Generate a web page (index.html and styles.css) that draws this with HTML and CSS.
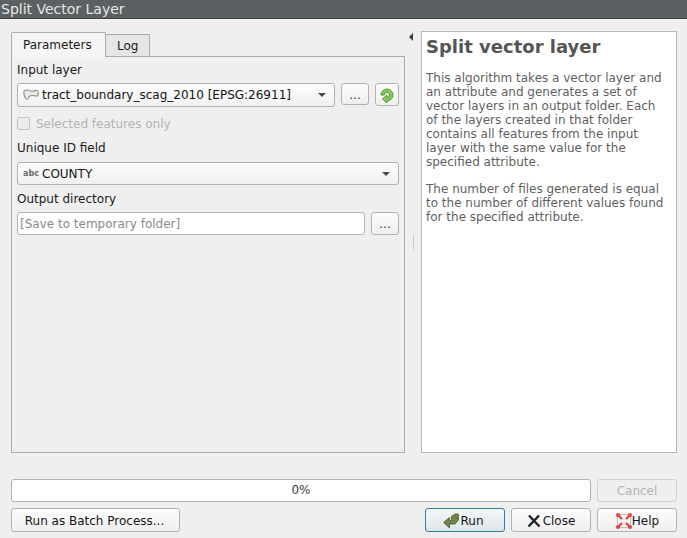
FILE: index.html
```html
<!DOCTYPE html>
<html lang="en">
<head>
<meta charset="utf-8">
<title>Split Vector Layer</title>
<link rel="stylesheet" href="styles.css">
</head>
<body>
<div class="window">
  <div class="titlebar"><span class="title">Split Vector Layer</span></div>
  <div class="content">
    <div class="main">
      <div class="left">
        <div class="tabs">
          <div class="tab active">Parameters</div>
          <div class="tab">Log</div>
        </div>
        <div class="pane">
          <div class="label first">Input layer</div>
          <div class="row">
            <div class="combo grow">
              <svg class="ico-poly" width="16" height="12" viewBox="0 0 16 12"><path d="M0.8 3.5 Q0.8 1 3.5 1 Q6 0.8 8 2 Q10 2.8 12 1.5 Q15 0.8 15.3 3.5 Q15.5 7 13.5 7 Q10 6.3 7.5 6.7 Q5.8 7 5 9.5 Q4 11 2.8 9.5 Q0.8 6.5 0.8 3.5 Z" fill="#e9e9e6" stroke="#8e8e8b" stroke-width="1.1"/></svg>
              <span class="combo-text">tract_boundary_scag_2010 [EPSG:26911]</span>
              <span class="arrow"></span>
            </div>
            <button class="btn dots">...</button>
            <button class="btn refresh">
              <svg width="16" height="16" viewBox="0 0 16 16"><path d="M2 8 A6 6 0 1 1 8 14 L8 16 L3.5 12 L8 8 L8 10.5 A2.6 2.6 0 1 0 5.4 8 Z" fill="#86c95a" stroke="#4a9a35" stroke-width="1" stroke-linejoin="round"/></svg>
            </button>
          </div>
          <label class="check"><span class="box"></span>Selected features only</label>
          <div class="label uid">Unique ID field</div>
          <div class="combo field">
            <span class="abc">abc</span>
            <span class="combo-text">COUNTY</span>
            <span class="arrow"></span>
          </div>
          <div class="label out">Output directory</div>
          <div class="row">
            <div class="input grow">[Save to temporary folder]</div>
            <button class="btn dots tall">...</button>
          </div>
        </div>
      </div>
      <div class="splitter">
        <span class="collapse"></span>
        <span class="grip"></span>
      </div>
      <div class="help">
        <h1>Split vector layer</h1>
        <p>This algorithm takes a vector layer and an attribute and generates a set of vector layers in an output folder. Each of the layers created in that folder contains all features from the input layer with the same value for the specified attribute.</p>
        <p>The number of files generated is equal to the number of different values found for the specified attribute.</p>
      </div>
    </div>
    <div class="progress-row">
      <div class="progress">0%</div>
      <button class="btn cancel" disabled>Cancel</button>
    </div>
    <div class="button-row">
      <button class="btn batch">Run as Batch Process...</button>
      <span class="spacer"></span>
      <button class="btn act run">
        <svg width="16" height="16" viewBox="0 0 16 16"><path d="M0.7 9.5 L6.5 4.5 L6.5 7.5 L8.5 7.5 L8.5 3.5 L12 1 L15.3 1 L15.3 7 L12 11 L6.5 11 L6.5 15 Z" fill="#6f8447" stroke="#55683a" stroke-width="1" stroke-linejoin="round"/></svg>
        <span>Run</span>
      </button>
      <button class="btn act close">
        <svg width="14" height="14" viewBox="0 0 14 14"><path d="M2 1.5 L12.5 12.5 M12 1.5 L1.5 12.5" stroke="#222" stroke-width="2.4"/></svg>
        <span>Close</span>
      </button>
      <button class="btn act helpbtn">
        <svg width="18" height="18" viewBox="0 0 18 18"><rect x="2.5" y="2.5" width="13" height="13" fill="#f7f2f2" stroke="#c4b8b8"/><path d="M3 3 L7 7 M15 3 L11 7 M3 15 L7 11 M15 15 L11 11" stroke="#e04545" stroke-width="2.4"/><circle cx="3" cy="3" r="2" fill="#e04545"/><circle cx="15" cy="3" r="2" fill="#e04545"/><circle cx="3" cy="15" r="2" fill="#e04545"/><circle cx="15" cy="15" r="2" fill="#e04545"/></svg>
        <span>Help</span>
      </button>
    </div>
  </div>
</div>
</body>
</html>
```
FILE: styles.css
```css
* { box-sizing: border-box; }
html, body { margin: 0; padding: 0; }
body {
  width: 687px;
  height: 538px;
  overflow: hidden;
  background: #efefef;
  font-family: "DejaVu Sans", sans-serif;
  font-size: 12px;
  color: #1a1a1a;
}
.window { display: flex; flex-direction: column; height: 538px; }
.titlebar {
  height: 19px;
  flex: none;
  background: #5b6162;
  border-bottom: 1px solid #3f4445;
  overflow: hidden;
  padding-left: 1px;
}
.title {
  display: block;
  margin-top: 0;
  font-size: 14px;
  line-height: 18px;
  color: #e6e6e6;
}
.content { flex: 1; display: flex; flex-direction: column; padding: 12px 10px 6px 11px; min-height: 0; }
.main { display: flex; height: 422px; flex: none; }
.left { width: 394px; flex: none; display: flex; flex-direction: column; padding-top: 1px; }
.tabs { display: flex; align-items: flex-end; height: 24px; flex: none; position: relative; z-index: 1; }
.tab {
  height: 22px;
  padding: 3px 11px 0;
  background: #e6e6e6;
  border: 1px solid #ababab;
  border-bottom: 0;
  border-left: 0;
  border-radius: 0 2px 0 0;
  line-height: 17px;
}
.tab.active {
  height: 25px;
  margin-bottom: -1px;
  width: 95px;
  padding: 3px 11px 0;
  background: #f5f5f5;
  border-left: 1px solid #ababab;
  border-radius: 2px 2px 0 0;
  line-height: 18px;
  text-align: left;
}
.pane {
  flex: 1;
  background: #efefef;
  border: 1px solid #ababab;
  padding: 6px 5px 0;
}
.label { line-height: 15px; }
.row { display: flex; align-items: flex-start; gap: 6px; }
.grow { flex: 1; min-width: 0; }
.first { margin-bottom: 5px; }
.combo {
  height: 24px;
  display: flex;
  align-items: center;
  padding: 0 8px 0 5px;
  background: linear-gradient(#fdfdfd, #f0f0f0);
  border: 1px solid #b2b2b2;
  border-radius: 3px;
  color: #141414;
}
.combo-text { flex: 1; white-space: nowrap; }
.ico-poly { margin-right: 3px; flex: none; }
.abc { font-size: 8px; font-weight: bold; color: #6a6a6a; width: 19px; flex: none; }
.arrow {
  width: 0; height: 0; flex: none;
  border-left: 4px solid transparent;
  border-right: 4px solid transparent;
  border-top: 4px solid #4a4a4a;
}
.btn {
  font-family: inherit;
  font-size: 12px;
  color: #141414;
  background: linear-gradient(#fcfcfc, #efefef);
  border: 1px solid #b2b2b2;
  border-radius: 3px;
  padding: 1px 0 0;
  height: 24px;
}
.dots { width: 28px; height: 22px; color: #4a3a2a; flex: none; }
.dots.tall { height: 23px; }
.refresh {
  width: 24px; height: 23px; flex: none;
  display: flex; align-items: center; justify-content: center;
}
.check {
  display: flex;
  align-items: center;
  gap: 6px;
  margin-top: 9px;
  height: 15px;
  color: #b4b4b4;
}
.box {
  width: 13px; height: 13px;
  border: 1px solid #c4c4c4;
  border-radius: 2px;
  background: #ececec;
  flex: none;
}
.uid { margin-top: 10px; margin-bottom: 6px; }
.field { height: 23px; }
.out { margin-top: 7px; margin-bottom: 5px; }
.input {
  height: 23px;
  line-height: 22px;
  padding-left: 2px;
  background: #fff;
  border: 1px solid #b2b2b2;
  border-radius: 3px;
  color: #8a8a8a;
}
.splitter {
  width: 16px;
  flex: none;
  display: flex;
  flex-direction: column;
  align-items: center;
  padding-top: 2px;
}
.collapse {
  width: 0; height: 0;
  align-self: flex-start;
  margin-left: 4px;
  border-top: 4px solid transparent;
  border-bottom: 4px solid transparent;
  border-right: 4px solid #3d3d3d;
}
.grip {
  margin-top: 194px;
  height: 15px;
  width: 1px;
  border-left: 1px dotted #a8a8a8;
}
.help {
  width: 256px;
  flex: none;
  background: #fff;
  border: 1px solid #b8b8b8;
  padding: 4px 10px 4px 4px;
  color: #5f5f5f;
  line-height: 14px;
}
.help h1 {
  margin: 0 0 13px;
  font-size: 18px;
  line-height: 22px;
  font-weight: bold;
  color: #555;
  white-space: nowrap;
}
.help p { margin: 0 0 13px; }
.progress-row { display: flex; gap: 6px; margin-top: 26px; flex: none; }
.progress {
  flex: 1;
  height: 23px;
  line-height: 21px;
  text-align: center;
  background: #fff;
  border: 1px solid #b2b2b2;
  border-radius: 3px;
  color: #3c3c3c;
}
.cancel {
  width: 80px;
  height: 23px;
  color: #b4b4b4;
  background: #efefef;
  border-color: #cfcfcf;
}
.button-row { display: flex; gap: 6px; margin-top: 6px; flex: none; }
.spacer { flex: 1; }
.batch { width: 169px; padding-right: 2px; }
.act {
  width: 80px;
  display: flex;
  align-items: center;
  justify-content: center;
}
.run {
  border-color: #2f7ea8;
  background: linear-gradient(#f4f7f9, #dfe6eb);
}
.run svg { margin-right: 1px; margin-left: -3px; }
.close svg { margin-right: 2px; }
.helpbtn svg { margin-right: -1px; }
```
